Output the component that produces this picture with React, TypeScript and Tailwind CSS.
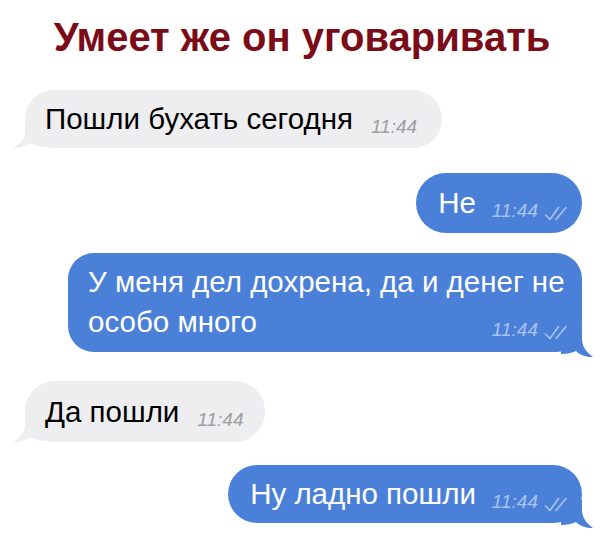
import React from "react";

const BLUE = "#4a80d8";
const GRAY = "#eeeef1";

function Checks() {
  return (
    <svg width="24" height="15" viewBox="0 0 24 15" className="ml-[6px] relative top-[1px]" fill="none">
      <path d="M1.5 9 L6 13.5 L14.5 1.5" stroke="#a9c3ef" strokeWidth="1.6" strokeLinecap="round" strokeLinejoin="round" />
      <path d="M12 13.5 L22 1.5" stroke="#a9c3ef" strokeWidth="1.6" strokeLinecap="round" />
    </svg>
  );
}

function TailLeft() {
  return (
    <svg
      className="absolute left-[-12px] bottom-0"
      width="32"
      height="24"
      viewBox="0 0 32 24"
    >
      <path
        d="M12 0 L12 8 C12 15 7 20 0 24 C7 24 13 22 17 19 C21 21 26 23 32 23 L32 0 Z"
        fill={GRAY}
      />
    </svg>
  );
}

function TailRight() {
  return (
    <svg
      className="absolute right-[-11px] bottom-[-5px]"
      width="32"
      height="28"
      viewBox="0 0 32 28"
    >
      <path
        d="M21 0 L21 10 C21 17 25 23 32 28 C25 28 19 26 15 22 C11 24 6 25 0 25 L0 0 Z"
        fill={BLUE}
      />
    </svg>
  );
}

function TimeIn() {
  return (
    <span className="italic text-[19px] leading-none text-[#9d9da2] ml-[18px] relative top-[4px]">11:44</span>
  );
}

function TimeOut() {
  return (
    <span className="flex items-end ml-[16px] relative top-[4px]">
      <span className="italic text-[19px] leading-none text-[#a9c3ef]">11:44</span>
      <Checks />
    </span>
  );
}

export default function App() {
  return (
    <div
      className="w-[604px] h-[537px] bg-white overflow-hidden flex flex-col"
      style={{ fontFamily: '"Liberation Sans", Arial, sans-serif' }}
    >
      <h1 className="text-center font-bold text-[40px] leading-[40px] h-[40px] text-[#7b0c17] mt-[17px]">
        Умеет же он уговаривать
      </h1>

      {/* Bubble 1 */}
      <div className="self-start ml-[25px] mt-[33px] relative">
        <TailLeft />
        <div className="relative h-[58px] rounded-[29px] bg-[#eeeef1] pl-[20px] pr-[25px] flex items-center">
          <div className="flex items-baseline">
            <span className="text-[29.5px] leading-none text-black">Пошли бухать сегодня</span>
            <TimeIn />
          </div>
        </div>
      </div>

      {/* Bubble 2 */}
      <div className="self-end mr-[22px] mt-[25px] relative">
        <div className="relative h-[60px] rounded-[30px] bg-[#4a80d8] pl-[22px] pr-[14px] flex items-center">
          <div className="flex items-baseline">
            <span className="text-[29.5px] leading-none text-white">Не</span>
            <TimeOut />
          </div>
        </div>
      </div>

      {/* Bubble 3 */}
      <div className="self-end mr-[22px] mt-[20px] relative">
        <TailRight />
        <div className="relative w-[514px] rounded-[26px] bg-[#4a80d8] pl-[20px] pr-[14px] pt-[9px] pb-[10px] flex flex-col text-white text-[29.5px] leading-[40px]">
          <span>У меня дел дохрена, да и денег не</span>
          <div className="flex items-baseline justify-between">
            <span>особо много</span>
            <TimeOut />
          </div>
        </div>
      </div>

      {/* Bubble 4 */}
      <div className="self-start ml-[25px] mt-[29px] relative">
        <TailLeft />
        <div className="relative h-[61px] rounded-[30px] bg-[#eeeef1] pl-[20px] pr-[22px] flex items-center">
          <div className="flex items-baseline">
            <span className="text-[29.5px] leading-none text-black">Да пошли</span>
            <TimeIn />
          </div>
        </div>
      </div>

      {/* Bubble 5 */}
      <div className="self-end mr-[22px] mt-[23px] relative">
        <TailRight />
        <div className="relative h-[58px] rounded-[29px] bg-[#4a80d8] pl-[22px] pr-[14px] flex items-center">
          <div className="flex items-baseline">
            <span className="text-[29.5px] leading-none text-white">Ну ладно пошли</span>
            <TimeOut />
          </div>
        </div>
      </div>
    </div>
  );
}
